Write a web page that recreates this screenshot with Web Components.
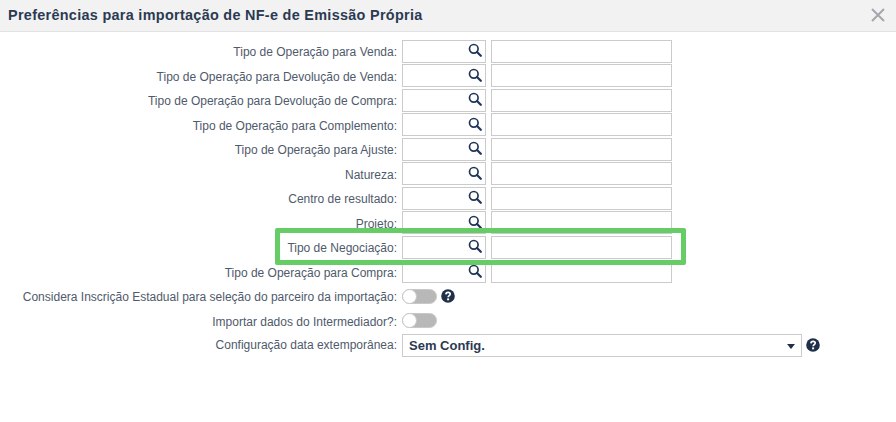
<!DOCTYPE html>
<html lang="pt-BR">
<head>
<meta charset="utf-8">
<title>Preferências</title>
<style>
    html, body { margin: 0; background: #fff; }
    body { font-family: "Liberation Sans", Arial, sans-serif; overflow: hidden; }
</style>
</head>
<body>
<pref-dialog titulo="Preferências para importação de NF-e de Emissão Própria">
    <pesquisa-row label="Tipo de Operação para Venda:"></pesquisa-row>
    <pesquisa-row label="Tipo de Operação para Devolução de Venda:"></pesquisa-row>
    <pesquisa-row label="Tipo de Operação para Devolução de Compra:"></pesquisa-row>
    <pesquisa-row label="Tipo de Operação para Complemento:"></pesquisa-row>
    <pesquisa-row label="Tipo de Operação para Ajuste:"></pesquisa-row>
    <pesquisa-row label="Natureza:"></pesquisa-row>
    <pesquisa-row label="Centro de resultado:"></pesquisa-row>
    <pesquisa-row label="Projeto:"></pesquisa-row>
    <pesquisa-row label="Tipo de Negociação:"></pesquisa-row>
    <pesquisa-row label="Tipo de Operação para Compra:"></pesquisa-row>
    <toggle-row label="Considera Inscrição Estadual para seleção do parceiro da importação:" ajuda></toggle-row>
    <toggle-row label="Importar dados do Intermediador?:"></toggle-row>
    <select-row label="Configuração data extemporânea:" valor="Sem Config."></select-row>
    <destaque-box slot="overlay"></destaque-box>
</pref-dialog>

<script>
// icones usados em mais de um componente
const ICONE_LUPA = `<svg width="14" height="14" viewBox="0 0 14 14" aria-hidden="true">
    <circle cx="5.8" cy="5.8" r="4.3" fill="none" stroke="#1f3557" stroke-width="1.7"/>
    <path d="M9 9l3.8 3.8" stroke="#1f3557" stroke-width="2.2" stroke-linecap="round"/>
</svg>`;

const ICONE_AJUDA = `<svg width="14" height="14" viewBox="0 0 14 14" aria-hidden="true">
    <circle cx="7" cy="7" r="6.8" fill="#1f3049"/>
    <path d="M4.9 5.4C5 4 5.9 3.3 7.1 3.3c1.3 0 2.1.8 2.1 1.8 0 1.6-2 1.6-2 3.2" fill="none" stroke="#fff" stroke-width="1.7"/>
    <rect x="6.1" y="9.4" width="2" height="1.9" fill="#fff"/>
</svg>`;

class PrefDialog extends HTMLElement {
    constructor() {
        super();
        this.attachShadow({ mode: 'open' });
        this.shadowRoot.innerHTML = `
        <style>
            :host {
                display: block;
                position: relative;
                width: 896px;
                height: 422px;
                background: #fff;
            }
            header {
                display: flex;
                align-items: center;
                justify-content: space-between;
                box-sizing: border-box;
                height: 32px;
                padding: 0 11px 1px 8px;
                background: #f2f2f2;
                border-bottom: 1px solid #e2e2e2;
            }
            h1 {
                margin: 0;
                font-size: 14.4px;
                font-weight: bold;
                letter-spacing: 0.31px;
                color: #2b3a52;
            }
            svg { display: block; }
            .corpo {
                display: flex;
                flex-direction: column;
                padding-top: 7px;
            }
        </style>
        <header>
            <h1></h1>
            <svg width="14" height="14" viewBox="0 0 14 14" aria-hidden="true">
                <path d="M1 1l12 12M13 1L1 13" stroke="#a3a8ae" stroke-width="2"/>
            </svg>
        </header>
        <div class="corpo"><slot></slot></div>
        <slot name="overlay"></slot>
        `;
    }

    connectedCallback() {
        this.shadowRoot.querySelector('h1').textContent = this.getAttribute('titulo');
    }
}

// linha base: rotulo alinhado a direita + conteudo
class FormRow extends HTMLElement {
    constructor() {
        super();
        this.attachShadow({ mode: 'open' });
        this.shadowRoot.innerHTML = `
        <style>
            :host {
                display: grid;
                grid-template-columns: 397px 1fr;
                column-gap: 5px;
                align-items: center;
                height: 24.5px;
            }
            label {
                box-sizing: border-box;
                padding-top: 2px;
                text-align: right;
                font-size: 12px;
                color: #4f5a6b;
                white-space: nowrap;
            }
            :host(select-row) label { padding-top: 0; }
            .campo { display: flex; align-items: center; }
            .caixa {
                box-sizing: border-box;
                height: 23px;
                border: 1px solid #cbcbcb;
                background: #fff;
            }
            .lupa {
                display: flex;
                align-items: center;
                justify-content: flex-end;
                width: 84px;
                padding-right: 3px;
                padding-bottom: 2px;
            }
            .descricao { width: 181px; margin-left: 5px; }
            .ajuda { display: block; line-height: 0; margin-left: 4px; }
            .toggle {
                position: relative;
                box-sizing: border-box;
                width: 35px;
                height: 15px;
                border-radius: 8px;
                background: #b8b8b8;
                border: 1px solid #c8c8c8;
            }
            .toggle::before {
                content: "";
                position: absolute;
                left: -1px;
                top: -1px;
                width: 15px;
                height: 15px;
                box-sizing: border-box;
                border-radius: 50%;
                background: #fff;
                border: 1px solid #c8c8c8;
            }
            .select {
                display: flex;
                align-items: center;
                justify-content: space-between;
                width: 400px;
                padding: 0 6px;
                font-size: 13px;
                font-weight: bold;
                color: #2b3a52;
            }
            .seta {
                width: 0;
                height: 0;
                border-left: 4.5px solid transparent;
                border-right: 4.5px solid transparent;
                border-top: 5px solid #1f3049;
                margin-top: 2px;
            }
        </style>
        <label></label>
        <div class="campo"></div>
        `;
    }

    connectedCallback() {
        this.shadowRoot.querySelector('label').textContent = this.getAttribute('label');
        this.shadowRoot.querySelector('.campo').innerHTML = this.campoHtml();
    }

    campoHtml() {
        return '';
    }
}

class PesquisaRow extends FormRow {
    campoHtml() {
        return `<div class="caixa lupa">${ICONE_LUPA}</div><div class="caixa descricao"></div>`;
    }
}

class ToggleRow extends FormRow {
    campoHtml() {
        const ajuda = this.hasAttribute('ajuda') ? `<span class="ajuda">${ICONE_AJUDA}</span>` : '';
        return `<div class="toggle"></div>${ajuda}`;
    }
}

class SelectRow extends FormRow {
    campoHtml() {
        return `<div class="caixa select"><span>${this.getAttribute('valor')}</span><span class="seta"></span></div>
            <span class="ajuda">${ICONE_AJUDA}</span>`;
    }
}

// retangulo verde de destaque por cima do formulario
class DestaqueBox extends HTMLElement {
    constructor() {
        super();
        this.attachShadow({ mode: 'open' });
        this.shadowRoot.innerHTML = `
        <style>
            :host {
                position: absolute;
                left: 275px;
                top: 228px;
                width: 411px;
                height: 37px;
                box-sizing: border-box;
                border: 5px solid #66cc66;
                border-radius: 2px;
                pointer-events: none;
            }
        </style>
        `;
    }
}

customElements.define('pref-dialog', PrefDialog);
customElements.define('pesquisa-row', PesquisaRow);
customElements.define('toggle-row', ToggleRow);
customElements.define('select-row', SelectRow);
customElements.define('destaque-box', DestaqueBox);
</script>
</body>
</html>
